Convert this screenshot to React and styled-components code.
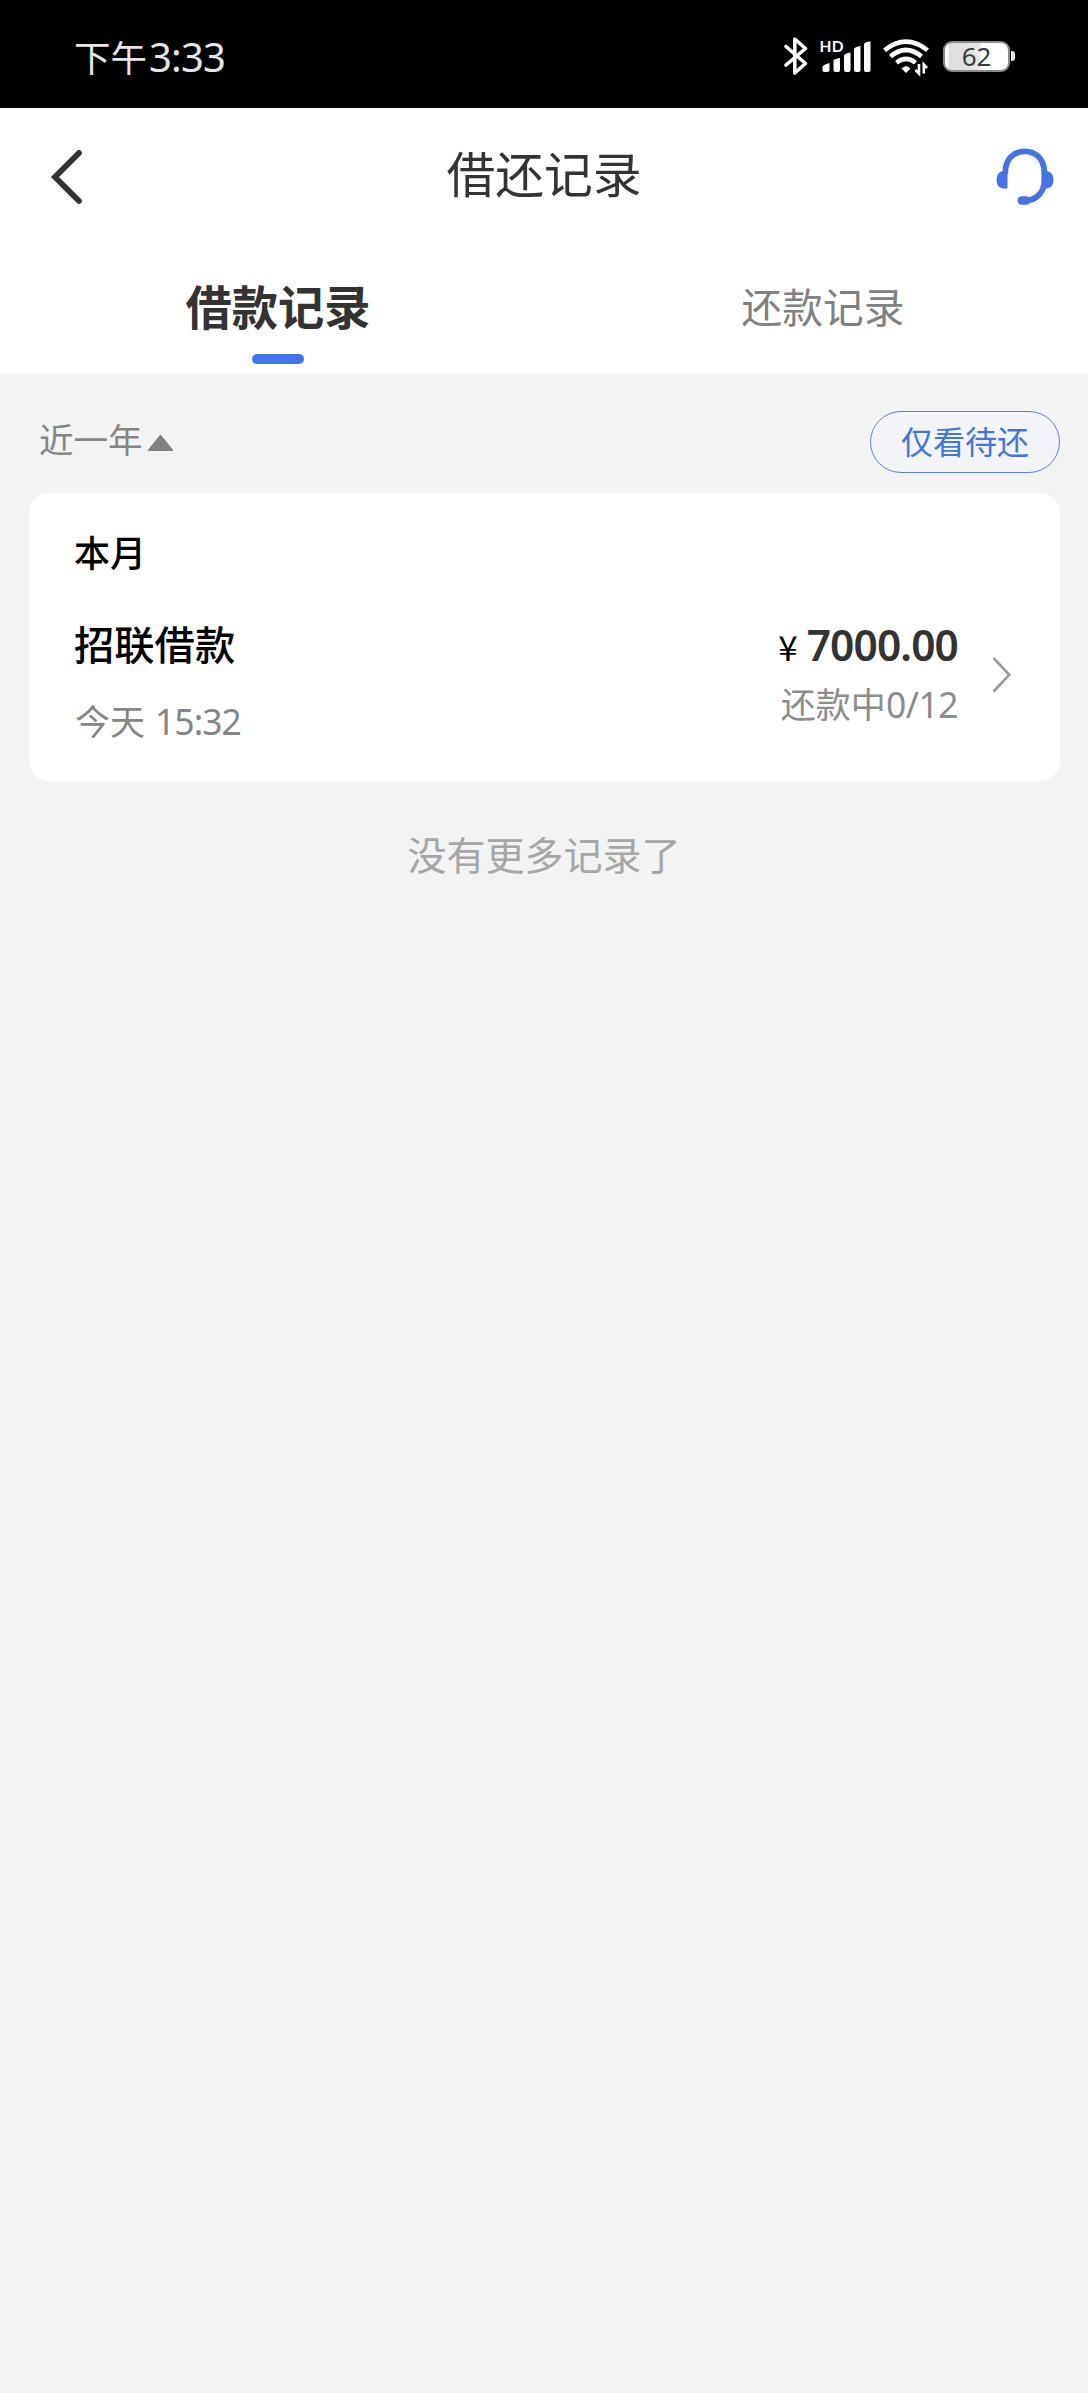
import React, { useState } from "react";
import styled, { createGlobalStyle } from "styled-components";

const GlobalStyle = createGlobalStyle`
  * {
    box-sizing: border-box;
  }

  body {
    margin: 0;
    background: #f3f3f3;
    font-family: "Noto Sans CJK SC", "Noto Sans", sans-serif;
  }
`;

const Page = styled.div`
  width: 1088px;
  min-height: 2393px;
  background: #f3f3f3;
`;

const StatusBar = styled.div`
  display: flex;
  justify-content: space-between;
  height: 108px;
  padding: 0 74px;
  background: #000;
`;

const Clock = styled.div`
  display: flex;
  align-items: baseline;
  padding-top: 31px;
  color: #e6e6e6;
  font-size: 36.5px;
  line-height: 52px;
`;

const ClockDigits = styled.span`
  margin-left: 2px;
  font-family: "Noto Sans", sans-serif;
  font-size: 40px;
  letter-spacing: -0.8px;
  line-height: 52px;
`;

const StatusIcons = styled.div`
  display: flex;
  align-items: flex-start;
  padding-top: 36px;
`;

const Battery = styled.div`
  position: relative;
  width: 67px;
  height: 31px;
  margin: 5px 4px 0 13px;
  border: 2px solid #8a8a8a;
  border-radius: 9px;
  background: linear-gradient(90deg, #fff 3px, #dedede 4px, #e6e6e6 34px, #fff 38px);
  color: #3c3c3c;
  font-family: "Noto Sans", sans-serif;
  font-size: 26px;
  line-height: 27px;
  text-align: center;

  &:after {
    content: '';
    position: absolute;
    top: 8px;
    right: -7px;
    width: 4px;
    height: 10px;
    border-radius: 0 3px 3px 0;
    background: #e8e8e8;
  }
`;

const Header = styled.header`
  display: flex;
  align-items: center;
  justify-content: space-between;
  height: 126px;
  padding: 0 32px;
  background: #fff;
`;

const Title = styled.h1`
  margin: 2px 0 0;
  color: #333;
  font-size: 48.8px;
  font-weight: 400;
  line-height: 72px;
`;

const IconButton = styled.button`
  display: flex;
  width: 76px;
  padding: ${({ $end }) => ($end ? "12px 0 0" : "12px 0 0 14px")};
  border: 0;
  background: none;
  justify-content: ${({ $end }) => ($end ? "flex-end" : "flex-start")};
`;

const Tabs = styled.nav`
  display: grid;
  grid-template-columns: 1fr 1fr;
  column-gap: 15px;
  height: 139px;
  padding: 41px 0 0 13px;
  background: #fff;
`;

const Tab = styled.button`
  display: flex;
  flex-direction: column;
  align-items: center;
  padding: ${({ $active }) => ($active ? "0" : "1px 0 0")};
  border: 0;
  background: none;
  color: ${({ $active }) => ($active ? "#333" : "#808080")};
  font-family: inherit;
  font-size: ${({ $active }) => ($active ? "46.3px" : "40.7px")};
  font-weight: ${({ $active }) => ($active ? 700 : 400)};
  line-height: 60px;

  &:after {
    content: '';
    width: 52px;
    height: 10px;
    margin-top: 19px;
    border-radius: 5px;
    background: ${({ $active }) => ($active ? "#4473ec" : "transparent")};
  }
`;

const FilterRow = styled.div`
  display: flex;
  align-items: flex-start;
  justify-content: space-between;
  height: 120px;
  padding: 38px 28px 0 39px;
`;

const Period = styled.div`
  display: flex;
  align-items: center;
  gap: 4px;
  color: #858585;
  font-size: 34.5px;
  line-height: 54px;

  svg {
    margin-top: 10px;
  }
`;

const PendingButton = styled.button`
  width: 190px;
  height: 62px;
  padding: 0 0 4px;
  border: 1.5px solid #5f80d4;
  border-radius: 31px;
  background: #f2f4f7;
  color: #4474dc;
  font-family: inherit;
  font-size: 32px;
  line-height: 54px;
`;

const Card = styled.section`
  margin: 0 28px 0 29px;
  height: 288px;
  padding: 33px 46px 0 45px;
  border-radius: 20px;
  background: #fff;
`;

const Month = styled.h2`
  margin: 0 0 42px;
  color: #000;
  font-size: 36px;
  font-weight: 500;
  line-height: 50px;
`;

const Record = styled.div`
  display: flex;
  align-items: flex-start;
`;

const RecordInfo = styled.div`
  flex: 1;
`;

const Name = styled.div`
  color: #000;
  font-size: 40.3px;
  font-weight: 500;
  line-height: 50px;
`;

const Time = styled.div`
  display: flex;
  align-items: baseline;
  gap: 10px;
  height: 50px;
  margin-top: 27px;
  padding-left: 1px;
  color: #858585;
  font-size: 35px;
  line-height: 50px;
`;

const Digits = styled.span`
  font-family: "Noto Sans", sans-serif;
  font-size: 35.5px;
  letter-spacing: ${({ $spacing }) => $spacing}px;
`;

const RecordAmount = styled.div`
  display: flex;
  flex-direction: column;
  align-items: flex-end;
`;

const Amount = styled.div`
  display: flex;
  align-items: baseline;
  gap: 10px;
  height: 50px;
  margin-top: 2px;
  color: #333;
  font-family: "Noto Sans", sans-serif;
  font-size: 42.5px;
  font-weight: 600;
  letter-spacing: -0.9px;
  line-height: 50px;
`;

const Currency = styled.span`
  color: #000;
  font-family: "Noto Sans CJK SC", sans-serif;
  font-size: 35px;
  font-weight: 400;
`;

const Progress = styled.div`
  display: flex;
  align-items: baseline;
  height: 50px;
  margin-top: 8px;
  color: #8c8c8c;
  font-size: 35px;
  line-height: 50px;
`;

const Chevron = styled.svg`
  margin: 38px 0 0 34px;
`;

const Footer = styled.p`
  margin: 42px 0 0;
  color: #a6a6a6;
  font-size: 39px;
  line-height: 60px;
  text-align: center;
`;

const BluetoothIcon = () => (
  <svg width="28" height="42" viewBox="0 0 28 42" fill="none" stroke="#fff" strokeWidth="3.6" strokeLinejoin="round" strokeLinecap="round">
    <path d="M4 10.500L23.500 27.500L12.800 37V3L23.500 12.500L4 29" />
  </svg>
);

const SignalIcon = () => (
  <svg width="72" height="42" viewBox="-7.500 0 72 42" fill="#fff">
    <text x="2" y="15.500" fontFamily="Lato" fontSize="15.500" fontWeight="700" textLength="24">HD</text>
    <path d="M5 31q0-2 7-4v7q0 2-2 2H7q-2 0-2-2z" />
    <path d="M16 24.500q0-1.500 6.500-2.500v12q0 2-2 2H18q-2 0-2-2z" />
    <path d="M26.500 20q0-2.500 6.500-3.500V34q0 2-2 2h-2.500q-2 0-2-2z" />
    <path d="M36.500 13.500q0-2.500 6.500-3.500V34q0 2-2 2h-2.500q-2 0-2-2z" />
    <path d="M46.500 8q1-2.500 6.500-2.500V34q0 2-2 2h-2.500q-2 0-2-2z" />
  </svg>
);

const WifiIcon = () => (
  <svg width="48" height="42" viewBox="0 0 48 42" fill="none" stroke="#fff" strokeWidth="4.600">
    <path d="M2.500 14.200Q24 -2.800 45.500 14.200" />
    <path d="M8.500 20.500Q24 7.500 39.500 20.500" />
    <path d="M14.500 26.700Q24 19 33.500 26.700" />
    <path d="M24 37l-4.500-4.500q4.500-4.500 9 0z" fill="#fff" stroke="none" />
    <path d="M37 28v9.500l-3.500-3.500M41.800 37.500V28.500l3.200 3.500" strokeWidth="2.600" />
  </svg>
);

const BackIcon = () => (
  <svg width="38" height="54" viewBox="0 0 38 54" fill="none" stroke="#333" strokeWidth="5.800" strokeLinecap="round">
    <path d="M33 3L9 27L33 51" strokeLinejoin="miter" />
  </svg>
);

const HeadsetIcon = () => (
  <svg width="62" height="60" viewBox="0 0 62 60" fill="none" stroke="#4473e6" strokeWidth="5.800">
    <path d="M11.300 25C11.300 12 20 4.300 30.800 4.300S50.300 12 50.300 25v9c0 11-8 19.500-19 19.500" strokeLinecap="round" />
    <path d="M13.500 24v17.500H9q-6.500-1-6.500-8.700T9 24zM48 24h5q6.500 1 6.500 8.700T53 41.500h-5z" fill="#4473e6" stroke="none" />
    <rect x="23.500" y="49.300" width="13" height="8.500" rx="4.200" fill="#4473e6" stroke="none" />
  </svg>
);

const tabs = ["借款记录", "还款记录"];

const record = {
  name: "招联借款",
  day: "今天",
  time: "15:32",
  amount: "7000.00",
  status: "还款中",
  progress: "0/12",
};

function App() {
  const [active, setActive] = useState(0);

  return (
    <Page>
      <GlobalStyle />
      <StatusBar>
        <Clock>
          下午<ClockDigits>3:33</ClockDigits>
        </Clock>
        <StatusIcons>
          <BluetoothIcon />
          <SignalIcon />
          <WifiIcon />
          <Battery>62</Battery>
        </StatusIcons>
      </StatusBar>

      <Header>
        <IconButton aria-label="返回">
          <BackIcon />
        </IconButton>
        <Title>借还记录</Title>
        <IconButton $end aria-label="客服">
          <HeadsetIcon />
        </IconButton>
      </Header>

      <Tabs>
        {tabs.map((tab, index) => (
          <Tab key={tab} $active={index === active} onClick={() => setActive(index)}>
            {tab}
          </Tab>
        ))}
      </Tabs>

      <FilterRow>
        <Period>
          近一年
          <svg width="27" height="18" viewBox="0 0 27 18">
            <path d="M13.500 1L26 16.500H1z" fill="#808080" stroke="#808080" strokeLinejoin="round" />
          </svg>
        </Period>
        <PendingButton>仅看待还</PendingButton>
      </FilterRow>

      <Card>
        <Month>本月</Month>
        <Record>
          <RecordInfo>
            <Name>{record.name}</Name>
            <Time>
              {record.day}
              <Digits $spacing={-1}>{record.time}</Digits>
            </Time>
          </RecordInfo>
          <RecordAmount>
            <Amount>
              <Currency>¥</Currency>
              {record.amount}
            </Amount>
            <Progress>
              {record.status}
              <Digits $spacing={-0.5}>{record.progress}</Digits>
            </Progress>
          </RecordAmount>
          <Chevron width="22" height="38" viewBox="0 0 22 38" fill="none" stroke="#999" strokeWidth="2.600">
            <path d="M1.500 2L17.300 18.800L1.500 35.500" />
          </Chevron>
        </Record>
      </Card>

      <Footer>没有更多记录了</Footer>
    </Page>
  );
}

export default App;
